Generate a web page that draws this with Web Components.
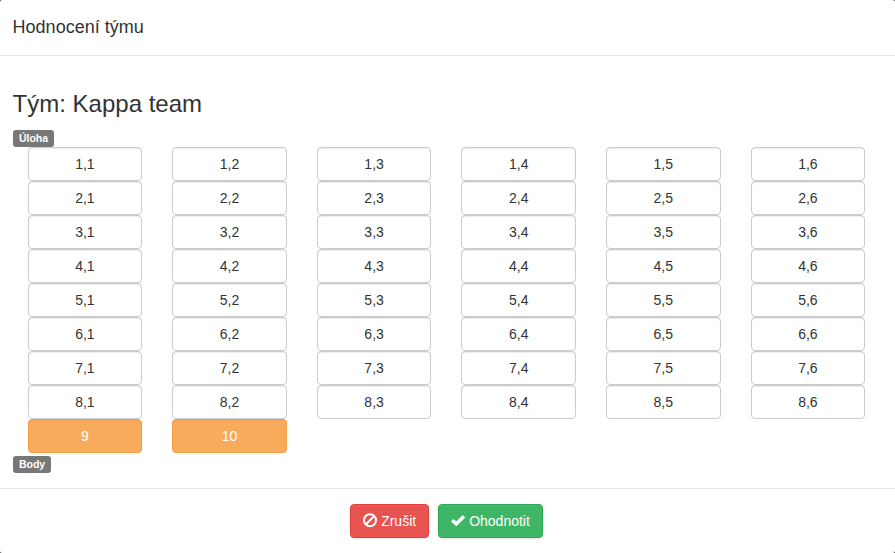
<!DOCTYPE html>
<html lang="cs">
<head>
<meta charset="utf-8">
<title>Hodnocení týmu</title>
<style>
html,body{margin:0;height:100%;overflow:hidden;background:#333}
body{font-family:"Liberation Sans",Arial,sans-serif;font-size:14px;line-height:20px;color:#333}
</style>
</head>
<body>
<team-dialog>
  <span slot="title">Hodnocení týmu</span>
  <span slot="heading">Tým: Kappa team</span>
  <tag-label>Úloha</tag-label>
  <task-grid></task-grid>
  <tag-label>Body</tag-label>
  <action-button slot="actions" kind="danger">Zrušit</action-button>
  <action-button slot="actions" kind="success">Ohodnotit</action-button>
</team-dialog>
<script>
class BaseElement extends HTMLElement {
  constructor() {
    super();
    this.attachShadow({mode: 'open'}).innerHTML = this.render();
  }
}

customElements.define('tag-label', class extends BaseElement {
  render() {
    return `<style>
      :host{display:block;width:max-content;height:17px;box-sizing:border-box;padding:0 6.3px;border-radius:3px;
        background:#777;color:#fff;font-size:10.5px;font-weight:700;line-height:17px}
    </style><slot></slot>`;
  }
});

customElements.define('score-cell', class extends BaseElement {
  render() {
    return `<style>
      :host{display:block;box-sizing:border-box;height:34px;border:1px solid #ccc;border-radius:4px;background:#fff;
        text-align:center;line-height:32px;box-shadow:inset 0 1px 1px rgba(0,0,0,.075)}
      :host([selected]){background:#f8ab5c;border-color:#f79f45;color:#fff;box-shadow:inset 0 1px 2px rgba(0,0,0,.04)}
    </style><slot></slot>`;
  }
});

customElements.define('task-grid', class extends BaseElement {
  render() {
    let cells = '';
    for (let r = 1; r <= 8; r++)
      for (let c = 1; c <= 6; c++) cells += `<score-cell>${r},${c}</score-cell>`;
    cells += '<score-cell selected>9</score-cell><score-cell selected>10</score-cell>';
    return `<style>
      :host{display:grid;grid-template-columns:repeat(6,1fr);column-gap:30px;padding:0 15px}
    </style>${cells}`;
  }
});

customElements.define('action-button', class extends BaseElement {
  render() {
    const danger = this.getAttribute('kind') === 'danger';
    const icon = danger
      ? '<svg viewBox="0 0 14 14"><g fill="none" stroke="#fff" stroke-width="2"><circle cx="7" cy="6.2" r="6"/><path d="M3 10.2 11 2.2"/></g></svg>'
      : '<svg viewBox="0 0 14 14"><path fill="#fff" d="M0 7.6 2.4 5.1 5.3 7.4 11.7 1.1 14.2 3.5 5.4 12.3Z"/></svg>';
    return `<style>
      :host{display:flex;align-items:center;gap:4px;box-sizing:border-box;height:34px;padding:0 12px;
        border:1px solid ${danger ? '#e0403c' : '#28a854'};border-radius:4px;
        background:${danger ? '#e65350' : '#3fb665'};color:#fff;line-height:32px;
        box-shadow:inset 0 1px 0 rgba(255,255,255,.08),0 1px 2px rgba(0,0,0,.12)}
      svg{width:14px;height:14px;display:block;overflow:visible}
    </style>${icon}<span><slot></slot></span>`;
  }
});

customElements.define('team-dialog', class extends BaseElement {
  render() {
    return `<style>
      :host{display:flex;flex-direction:column;height:553px;background:#fff;border-radius:2px;overflow:hidden}
      header{box-sizing:border-box;height:56px;padding:14px 12.6px 0;border-bottom:1px solid #e5e5e5;font-size:18px;line-height:26px}
      main{box-sizing:border-box;height:432px;padding:34px 14.8px 0 12.6px}
      h3{margin:0 0 13px;font-size:24px;line-height:27px;font-weight:400}
      ::slotted(task-grid){margin-bottom:3px}
      footer{box-sizing:border-box;height:65px;padding-top:15px;border-top:1px solid #e5e5e5;display:flex;justify-content:center;gap:9px;padding-right:2px}
    </style>
    <header><slot name="title"></slot></header>
    <main><h3><slot name="heading"></slot></h3><slot></slot></main>
    <footer><slot name="actions"></slot></footer>`;
  }
});
</script>
</body>
</html>
